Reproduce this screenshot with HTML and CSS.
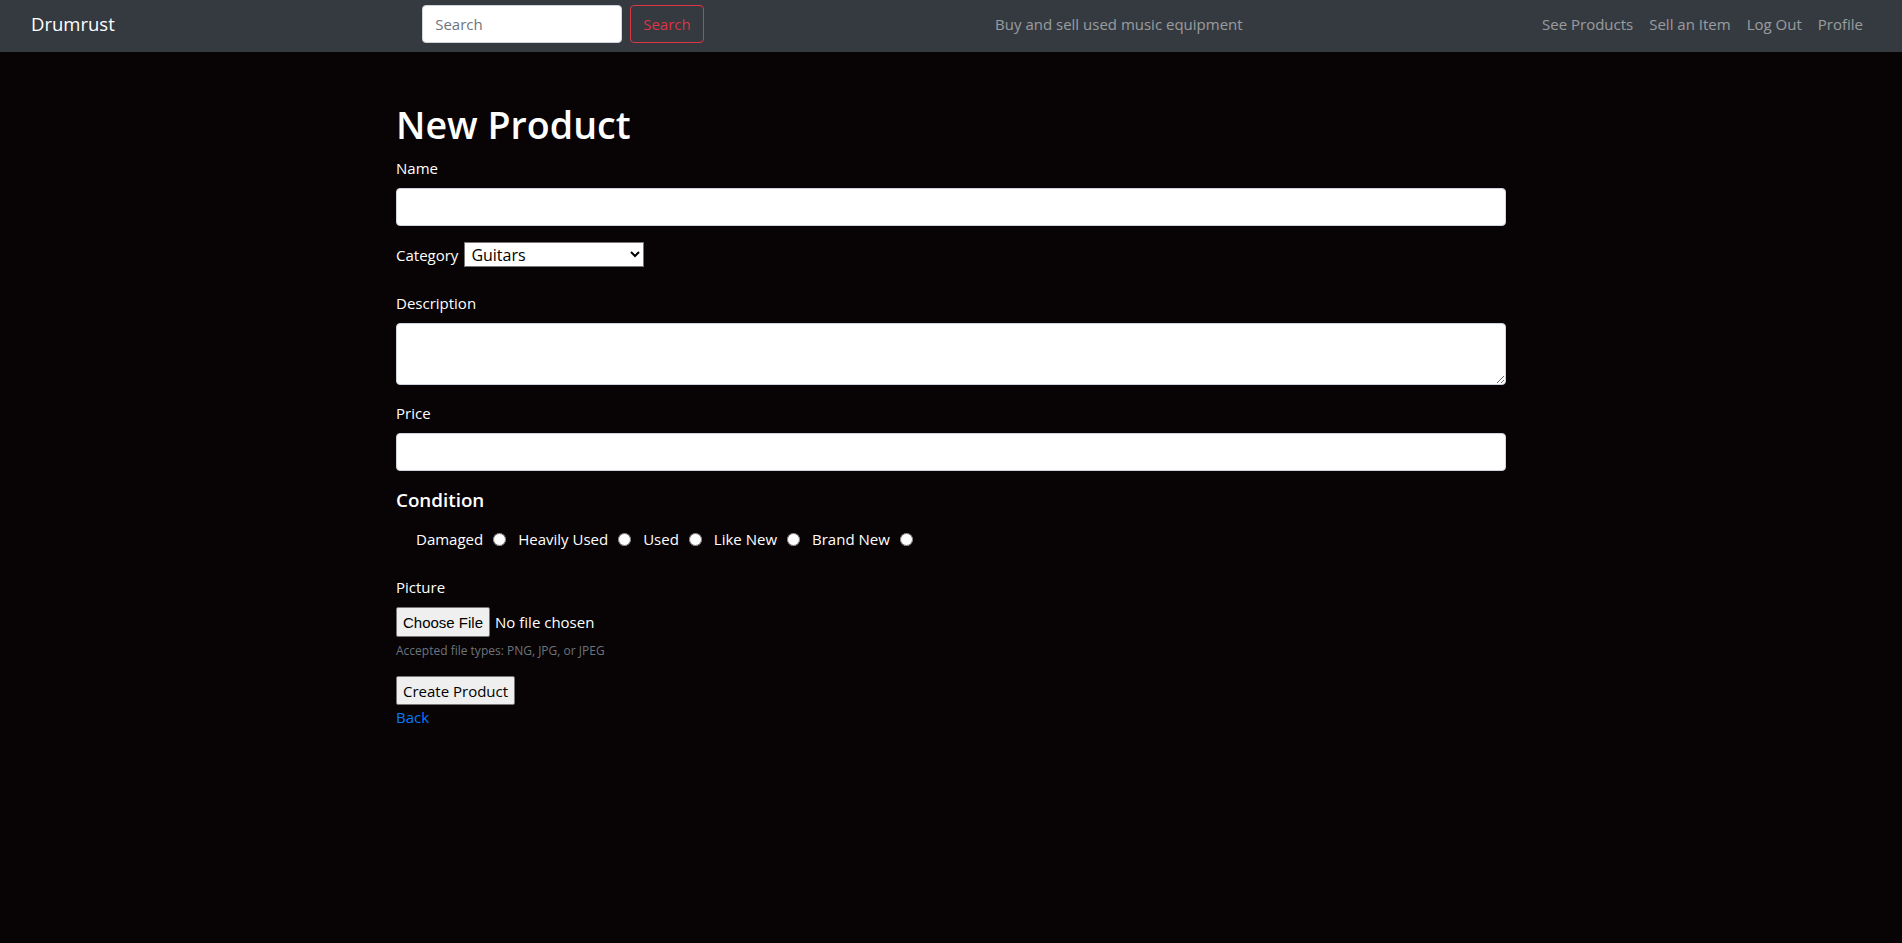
FILE: index.html
```html
<!DOCTYPE html>
<html lang="en">
<head>
<meta charset="utf-8">
<title>Drumrust</title>
<link rel="stylesheet" href="styles.css">
</head>
<body>
<nav class="navbar">
  <a class="brand" href="#">Drumrust</a>
  <form class="search">
    <input class="search-input" type="search" placeholder="Search">
    <button class="search-btn" type="button">Search</button>
  </form>
  <span class="tagline">Buy and sell used music equipment</span>
  <ul class="nav">
    <li><a class="nav-link" href="#">See Products</a></li>
    <li><a class="nav-link" href="#">Sell an Item</a></li>
    <li><a class="nav-link" href="#">Log Out</a></li>
    <li><a class="nav-link" href="#">Profile</a></li>
  </ul>
</nav>
<main class="container">
  <h1 class="title">New Product</h1>
  <form class="product-form">
    <div class="group">
      <label class="label" for="name">Name</label>
      <input class="control" id="name" type="text">
    </div>
    <div class="category-row">
      <label class="category-label" for="category">Category</label>
      <select class="category-select" id="category">
        <option>Guitars</option>
        <option>Drums</option>
        <option>Keyboards</option>
        <option>Amplifiers</option>
      </select>
    </div>
    <div class="group">
      <label class="label" for="description">Description</label>
      <textarea class="control area" id="description" rows="2"></textarea>
    </div>
    <div class="group">
      <label class="label" for="price">Price</label>
      <input class="control" id="price" type="text">
    </div>
    <h5 class="subtitle">Condition</h5>
    <div class="radios">
      <span class="radio-item"><label for="c1">Damaged</label><input class="radio" type="radio" name="condition" id="c1"></span>
      <span class="radio-item"><label for="c2">Heavily Used</label><input class="radio" type="radio" name="condition" id="c2"></span>
      <span class="radio-item"><label for="c3">Used</label><input class="radio" type="radio" name="condition" id="c3"></span>
      <span class="radio-item"><label for="c4">Like New</label><input class="radio" type="radio" name="condition" id="c4"></span>
      <span class="radio-item"><label for="c5">Brand New</label><input class="radio" type="radio" name="condition" id="c5"></span>
    </div>
    <div class="group">
      <label class="label" for="picture">Picture</label>
      <input class="file" id="picture" type="file">
      <small class="hint">Accepted file types: PNG, JPG, or JPEG</small>
    </div>
    <button class="submit" type="button">Create Product</button>
  </form>
  <a class="back" href="#">Back</a>
</main>
</body>
</html>
```
FILE: styles.css
```css
* { box-sizing: border-box; }
html, body { margin: 0; }
body {
  background: #080304;
  color: #fff;
  font-family: "Open Sans", "Noto Sans", sans-serif;
  font-size: 15px;
  line-height: 24px;
}
input, button, select, textarea { font-family: inherit; font-size: inherit; line-height: inherit; margin: 0; }

.navbar {
  background: #343a40;
  height: 52px;
  padding: 0 31px;
  display: flex;
  align-items: flex-start;
  justify-content: space-between;
}
.brand { color: #fff; text-decoration: none; font-size: 18.5px; line-height: 30px; margin-top: 9px; margin-right: 16px; }
.search { display: flex; gap: 8px; margin-top: 5px; }
.search-input {
  width: 200px; height: 38px; padding: 6px 12px;
  border: 1px solid #ced4da; border-radius: 4px; background: #fff; color: #495057;
}
.search-input::placeholder { color: #6c757d; }
.search-btn {
  height: 38px; padding: 6px 12px; background: transparent;
  border: 1px solid #dc3545; border-radius: 4px; color: #dc3545;
}
.tagline { color: rgba(255,255,255,.5); margin-top: 12px; }
.nav { list-style: none; margin: 12px 0 0; padding: 0; display: flex; }
.nav-link { display: block; padding: 0 8px; color: rgba(255,255,255,.5); text-decoration: none; }

.container { width: 1140px; margin: 49px auto 0; padding: 0 15px; }
.title { font-size: 37.6px; font-weight: 600; line-height: 48px; margin: 0 0 7px; }
.group { margin-bottom: 16px; }
.label { display: inline-block; margin-bottom: 8px; }
.control {
  display: block; width: 100%; height: 38px; padding: 6px 12px;
  border: 1px solid #ced4da; border-radius: 4px; background: #fff; color: #495057;
}
.area { height: 62px; resize: vertical; }
.category-row { display: flex; align-items: flex-start; height: 25px; margin-bottom: 24px; }
.category-label { margin-top: 1px; }
.category-select {
  width: 180px; height: 25px; margin-left: 6px; padding: 0 0 0 2px;
  font-size: 16px; line-height: 23px; border: 1px solid #767676; border-radius: 0; background: #fff; color: #000;
}
.subtitle { font-size: 18.8px; font-weight: 600; line-height: 24px; margin: 0 0 8px; padding-top: 1px; height: 24px; }
.radios { display: flex; padding: 8px 0 0 20px; margin-bottom: 24px; height: 32px; }
.radio-item { display: inline-flex; align-items: center; margin-right: 12px; height: 24px; }
.radio { width: 13px; height: 13px; margin: 0 0 0 10px; }
.file { display: block; height: 30px; }
.file::file-selector-button {
  height: 30px; padding: 1px 6px; margin-right: 5px;
  border: 1px solid #767676; border-radius: 2px; background: #efefef; color: #000;
}
.hint { display: block; margin-top: 4px; font-size: 12px; line-height: 19px; color: #6c757d; }
.submit {
  display: block; height: 29px; padding: 1px 6px; margin-top: 1px;
  border: 1px solid #767676; border-radius: 2px; background: #efefef; color: #000;
}
.back { color: #007bff; text-decoration: none; }
```
